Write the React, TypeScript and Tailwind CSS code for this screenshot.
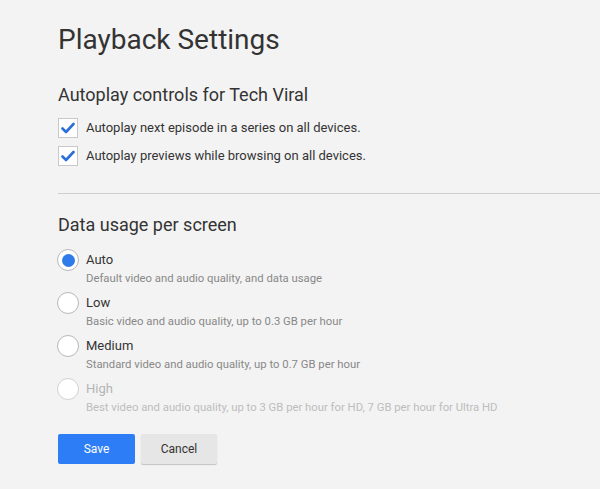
import React from "react";

const Check = () => (
  <div className="w-5 h-5 bg-white border border-[#c8c8c8] flex items-center justify-center shrink-0">
    <svg width="14" height="12" viewBox="0 0 14 12">
      <path d="M1.5 6.5 L5 10 L12.5 2" fill="none" stroke="#2b6fd8" strokeWidth="2.6" strokeLinecap="round" strokeLinejoin="round" />
    </svg>
  </div>
);

const Radio = ({ on, faded }: { on?: boolean; faded?: boolean }) => (
  <div
    className={`w-[22px] h-[22px] rounded-full bg-white border flex items-center justify-center shrink-0 ${
      faded ? "border-[#d2d2d2]" : "border-[#b8b8b8]"
    }`}
  >
    {on && <div className="w-[13px] h-[13px] rounded-full bg-[#2f7bea]" />}
  </div>
);

const options = [
  { t: "Auto", d: "Default video and audio quality, and data usage", on: true },
  { t: "Low", d: "Basic video and audio quality, up to 0.3 GB per hour" },
  { t: "Medium", d: "Standard video and audio quality, up to 0.7 GB per hour" },
  { t: "High", d: "Best video and audio quality, up to 3 GB per hour for HD, 7 GB per hour for Ultra HD", faded: true },
];

export default function App() {
  return (
    <div className="w-[600px] h-[489px] bg-[#f3f3f3] overflow-hidden pl-[58px] pt-[22px] font-['Roboto',sans-serif] text-[#333]">
      <h1 className="text-[28px] leading-[36px] text-[#333]">Playback Settings</h1>
      <h2 className="mt-[25px] text-[18px] leading-[24px] text-[#333]">Autoplay controls for Tech Viral</h2>
      <div className="mt-[11px] flex flex-col gap-[8px]">
        <div className="flex items-center gap-[8px] h-[20px]">
          <Check />
          <span className="text-[13px] text-[#333]">Autoplay next episode in a series on all devices.</span>
        </div>
        <div className="flex items-center gap-[8px] h-[20px]">
          <Check />
          <span className="text-[13px] text-[#333]">Autoplay previews while browsing on all devices.</span>
        </div>
      </div>
      <div className="mt-[27px] h-px bg-[#cfcfcf]" />
      <h2 className="mt-[19px] text-[18px] leading-[24px] text-[#333]">Data usage per screen</h2>
      <div className="mt-[12px] flex flex-col gap-[5px]">
        {options.map((o) => (
          <div key={o.t} className="flex gap-[7px] -ml-px">
            <Radio on={o.on} faded={o.faded} />
            <div className="flex flex-col">
              <span className={`text-[13px] leading-[22px] ${o.faded ? "text-[#b5b5b5]" : "text-[#333]"}`}>{o.t}</span>
              <span className={`text-[11.3px] leading-[16px] ${o.faded ? "text-[#bdbdbd]" : "text-[#888]"}`}>{o.d}</span>
            </div>
          </div>
        ))}
      </div>
      <div className="mt-[18px] flex gap-[6px]">
        <button className="w-[77px] h-[30px] bg-[#2d7df7] text-white text-[12px] rounded-[2px]">Save</button>
        <button className="w-[76px] h-[30px] bg-[#e6e6e6] text-[#333] text-[12px] rounded-[2px] shadow-[0_1px_1px_rgba(0,0,0,0.2)]">Cancel</button>
      </div>
    </div>
  );
}
